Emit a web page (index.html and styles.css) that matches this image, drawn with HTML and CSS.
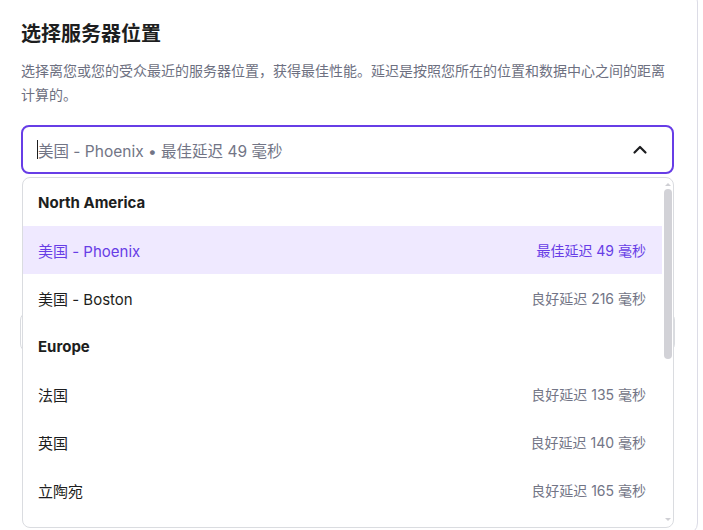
FILE: index.html
```html
<!DOCTYPE html>
<html lang="zh-CN">
<head>
<meta charset="utf-8">
<title>选择服务器位置</title>
<link rel="stylesheet" href="styles.css">
</head>
<body>
<div class="card">
  <h2 class="title">选择服务器位置</h2>
  <p class="desc">选择离您或您的受众最近的服务器位置，获得最佳性能。延迟是按照您所在的位置和数据中心之间的距离计算的。</p>
  <div class="select-wrap">
    <div class="select">
      <span class="caret"></span>
      <span class="value">美国 - Phoenix • 最佳延迟 49 毫秒</span>
      <svg class="chevron" width="24" height="24" viewBox="0 0 24 24" aria-hidden="true"><path d="M6.5 14.5 12 9l5.5 5.5" fill="none" stroke="#1d1e20" stroke-width="2.2" stroke-linecap="round" stroke-linejoin="round"/></svg>
    </div>
    <div class="next-field"></div>
    <div class="menu">
      <div class="list">
        <div class="group">North America</div>
        <div class="opt selected"><span>美国 - Phoenix</span><span class="lat">最佳延迟 49 毫秒</span></div>
        <div class="opt"><span>美国 - Boston</span><span class="lat">良好延迟 216 毫秒</span></div>
        <div class="group">Europe</div>
        <div class="opt"><span>法国</span><span class="lat">良好延迟 135 毫秒</span></div>
        <div class="opt"><span>英国</span><span class="lat">良好延迟 140 毫秒</span></div>
        <div class="opt"><span>立陶宛</span><span class="lat">良好延迟 165 毫秒</span></div>
      </div>
      <div class="scrollbar">
        <span class="arrow up"></span>
        <span class="thumb"></span>
        <span class="arrow down"></span>
      </div>
    </div>
  </div>
</div>
</body>
</html>
```

FILE: styles.css
```css
* { box-sizing: border-box; }
html, body { margin: 0; padding: 0; background: #ffffff; }
body {
  font-family: "Inter", "Noto Sans CJK SC", sans-serif;
  color: #1d1e20;
  overflow: hidden;
}
.card {
  width: 718px;
  margin: -10px 0 0 -20px;
  padding: 29px 23px 0 40px;
  border: 1px solid #dcdce6;
  border-radius: 12px;
  background: #fff;
  height: 545px;
}
.title {
  margin: 0;
  font-size: 20px;
  line-height: 28px;
  font-weight: 700;
  color: #1d1e20;
}
.desc {
  margin: 11px 0 0;
  font-size: 14px;
  line-height: 24px;
  color: #6d7081;
}
.select-wrap {
  position: relative;
  margin-top: 18px;
}
.select {
  height: 49px;
  border: 2px solid #673de6;
  border-radius: 8px;
  display: flex;
  align-items: center;
  padding: 0 20px 0 14px;
  background: #fff;
}
.caret {
  width: 1px;
  height: 19px;
  background: #1d1e20;
}
.value {
  flex: 1;
  font-size: 15.5px;
  color: #727586;
}
.chevron { display: block; }
.next-field {
  margin-top: 138px;
  margin-left: -1px;
  margin-right: -1px;
  height: 40px;
  border: 1px solid #dadce0;
  border-radius: 8px;
}
.menu {
  position: absolute;
  top: 52px;
  left: 1px;
  right: 0;
  height: 351px;
  background: #fff;
  border: 1px solid #dadce0;
  border-radius: 8px;
  overflow: hidden;
  display: flex;
}
.list {
  flex: 1;
  min-width: 0;
}
.scrollbar {
  width: 11px;
  display: flex;
  flex-direction: column;
  align-items: center;
  padding: 5px 0 6px;
}
.arrow {
  width: 0;
  height: 0;
  border-left: 3px solid transparent;
  border-right: 3px solid transparent;
}
.arrow.up { border-bottom: 3px solid #cfcfd4; }
.arrow.down { border-top: 3px solid #cfcfd4; margin-top: auto; }
.thumb {
  width: 8px;
  height: 170px;
  margin-top: 3px;
  background: #d2d2d7;
  border-radius: 4px;
}
.group {
  height: 48px;
  display: flex;
  align-items: center;
  padding: 0 15px;
  font-size: 15px;
  font-weight: 700;
  color: #1d1e20;
}
.opt {
  height: 48px;
  display: flex;
  align-items: center;
  justify-content: space-between;
  padding: 0 16px 0 15px;
  font-size: 15px;
  color: #1d1e20;
}
.opt .lat {
  font-size: 14px;
  color: #727586;
}
.opt.selected {
  background: #efe9ff;
  color: #673de6;
}
.opt.selected .lat { color: #673de6; }
```
